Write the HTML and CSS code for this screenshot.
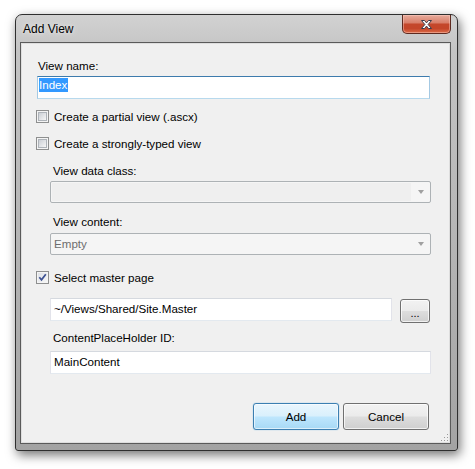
FILE: index.html
```html
<!DOCTYPE html>
<html>
<head>
<meta charset="utf-8">
<title>Add View</title>
<link rel="stylesheet" href="styles.css">
</head>
<body>
<div class="window">
  <div class="titlebar">
    <span class="title">Add View</span>
    <div class="close">
      <svg width="13" height="11" viewBox="0 0 13 11"><path d="M1.5 1.5h3l2 2.4 2-2.4h3l-3.4 4 3.4 4h-3l-2-2.4-2 2.4h-3l3.4-4z" fill="#fff" stroke="#3b3b4a" stroke-width="1" stroke-linejoin="round"/></svg>
    </div>
  </div>
  <div class="client">
    <div class="label">View name:</div>
    <div class="textbox focused"><span class="selected">Index</span></div>

    <div class="check-row first"><span class="checkbox"><span class="inner"></span></span><span>Create a partial view (.ascx)</span></div>
    <div class="check-row second"><span class="checkbox"><span class="inner"></span></span><span>Create a strongly-typed view</span></div>

    <div class="indent">
      <div class="label gap-a">View data class:</div>
      <div class="combo"><span class="combo-field"></span><span class="arrow"></span></div>
      <div class="label gap-b">View content:</div>
      <div class="combo c2"><span class="combo-text">Empty</span><span class="arrow"></span></div>
    </div>

    <div class="check-row third"><span class="checkbox checked"><span class="inner"><svg width="9" height="9" viewBox="0 0 9 9"><path d="M1.3 4.2 L3.5 6.8 L7.8 1.2" fill="none" stroke="#3d5192" stroke-width="1.7"/></svg></span></span><span>Select master page</span></div>

    <div class="indent">
      <div class="master-row">
        <div class="textbox master">~/Views/Shared/Site.Master</div>
        <div class="btn browse">...</div>
      </div>
      <div class="label gap-c">ContentPlaceHolder ID:</div>
      <div class="textbox main">MainContent</div>
    </div>

    <div class="buttons">
      <div class="btn default">Add</div>
      <div class="btn">Cancel</div>
    </div>

    <svg class="grip" width="9" height="9" viewBox="0 0 9 9">
      <rect x="7" y="1" width="1" height="1" fill="#9a9a9a"/>
      <rect x="4" y="4" width="1" height="1" fill="#9a9a9a"/>
      <rect x="7" y="4" width="1" height="1" fill="#9a9a9a"/>
      <rect x="1" y="7" width="1" height="1" fill="#9a9a9a"/>
      <rect x="4" y="7" width="1" height="1" fill="#9a9a9a"/>
      <rect x="7" y="7" width="1" height="1" fill="#9a9a9a"/>
    </svg>
  </div>
</div>
</body>
</html>
```
FILE: styles.css
```css
* { box-sizing: border-box; }
html, body { margin: 0; }
body {
  width: 475px;
  height: 469px;
  overflow: hidden;
  background: #fff;
  padding: 14px 0 0 15px;
  font-family: "Liberation Sans", Arial, sans-serif;
  font-size: 11.6px;
  color: #000;
}
.window {
  width: 443px;
  height: 437px;
  border: 1px solid #2f2f2f;
  border-radius: 7px 7px 3px 3px;
  background: linear-gradient(#d2d2d2 0%, #c4c4c4 8%, #b2b2b2 60%, #a3a3a3 100%);
  box-shadow: 2px 4px 11px rgba(0,0,0,0.55);
  display: flex;
  flex-direction: column;
}
.titlebar {
  height: 27px;
  display: flex;
  justify-content: space-between;
  align-items: flex-start;
}
.title {
  padding: 7px 0 0 7px;
  line-height: 15px;
  font-size: 12px;
  text-shadow: 0 0 6px #e6e6e6, 0 0 3px #e6e6e6;
}
.close {
  width: 49px;
  height: 19px;
  margin-right: 6px;
  border: 1px solid #5e2a20;
  border-top: none;
  border-radius: 0 0 5px 5px;
  background: linear-gradient(#e7ab9c 0%, #d9806b 42%, #c4472b 52%, #c4462a 75%, #dc6c48 100%);
  box-shadow: inset 0 0 0 1px rgba(255,210,200,0.45);
  display: flex;
  align-items: center;
  justify-content: center;
}
.client {
  flex: 1;
  margin: 0 6px 6px 4px;
  border: 1px solid #5a5a5a;
  background: #f0f0f0;
  box-shadow: inset 0 0 0 1px #dedede;
  padding: 15px 0 0 15px;
  display: flex;
  flex-direction: column;
  align-items: flex-start;
  position: relative;
}
.label {
  line-height: 16px;
  padding-left: 2px;
  white-space: nowrap;
}
.textbox {
  background: #fff;
  border: 1px solid;
  border-color: #d5d9df #e2e3ea #e3e9ef #e2e3ea;
  height: 23px;
  line-height: 20px;
  padding-left: 3px;
  white-space: nowrap;
}
.textbox.focused {
  margin: 2px 0 0 1px;
  width: 393px;
  border-color: #3d7bad #a4c9e3 #b7d9ed #a4c9e3;
  padding-left: 1px;
  padding-top: 1px;
  line-height: 14px;
}
.selected {
  background: #3399ff;
  color: #fff;
  display: inline-block;
  height: 14px;
  padding: 0 1px 0 0;
}
.check-row {
  display: flex;
  align-items: center;
  height: 16px;
  gap: 5px;
  white-space: nowrap;
}
.check-row.first { margin-top: 9px; }
.check-row.second { margin-top: 11px; }
.check-row.third { margin-top: 14px; }
.checkbox {
  width: 13px;
  height: 13px;
  border: 1px solid #8e8f8f;
  background: #f4f4f4;
  padding: 1px;
  display: block;
  flex: none;
}
.checkbox .inner {
  display: block;
  width: 9px;
  height: 9px;
  border: 1px solid #aeb3b9;
  background: linear-gradient(135deg, #cbcfd5, #f6f6f6);
  position: relative;
}
.checkbox.checked .inner {
  border: none;
  background: linear-gradient(135deg, #dfe2e8, #f6f6f6);
}
.checkbox .inner svg { display: block; }
.indent {
  margin-left: 14px;
  display: flex;
  flex-direction: column;
  align-items: flex-start;
}
.gap-a { margin-top: 12px; padding-left: 3px; }
.gap-b { margin-top: 11px; padding-left: 3px; }
.gap-c { margin-top: 7px; padding-left: 3px; }
.combo {
  width: 381px;
  height: 22px;
  margin-top: 2px;
  border: 1px solid #adb2b5;
  border-radius: 2px;
  background: #f5f5f5;
  display: flex;
  align-items: center;
  padding: 1px;
  position: relative;
}
.combo.c2 { margin-top: 3px; }
.combo-field {
  width: 359px;
  height: 18px;
  background: #efefef;
}
.combo-text {
  flex: 1;
  color: #6d6d6d;
  padding-left: 2px;
  line-height: 18px;
}
.arrow {
  width: 0;
  height: 0;
  border-left: 3.5px solid transparent;
  border-right: 3.5px solid transparent;
  border-top: 4px solid #a0a0a0;
  margin-left: auto;
  margin-right: 5px;
}
.master-row {
  margin-top: 13px;
  display: flex;
  gap: 8px;
  align-items: flex-start;
}
.textbox.master { width: 342px; }
.textbox.main { width: 381px; margin-top: 5px; }
.btn {
  border: 1px solid #707070;
  border-radius: 3px;
  background: linear-gradient(#f2f2f2 0%, #ebebeb 48%, #dddddd 52%, #cfcfcf 100%);
  box-shadow: inset 0 0 0 1px rgba(255,255,255,0.7);
  display: flex;
  align-items: center;
  justify-content: center;
  white-space: nowrap;
}
.btn.browse {
  width: 30px;
  height: 24px;
  margin-top: 1px;
  font-size: 11px;
  padding-top: 3px;
}
.buttons {
  margin-top: 29px;
  width: 393px;
  display: flex;
  justify-content: flex-end;
  gap: 4px;
}
.buttons .btn {
  width: 86px;
  height: 27px;
}
.btn.default {
  border-color: #3c7fb1;
  background: linear-gradient(#eaf6fd 0%, #d9f0fc 48%, #bee6fd 52%, #a7d9f5 100%);
  box-shadow: inset 0 0 0 1px rgba(255,255,255,0.6), 0 0 1px #48a7dd;
}
.grip {
  position: absolute;
  right: 1px;
  bottom: 1px;
}
```
